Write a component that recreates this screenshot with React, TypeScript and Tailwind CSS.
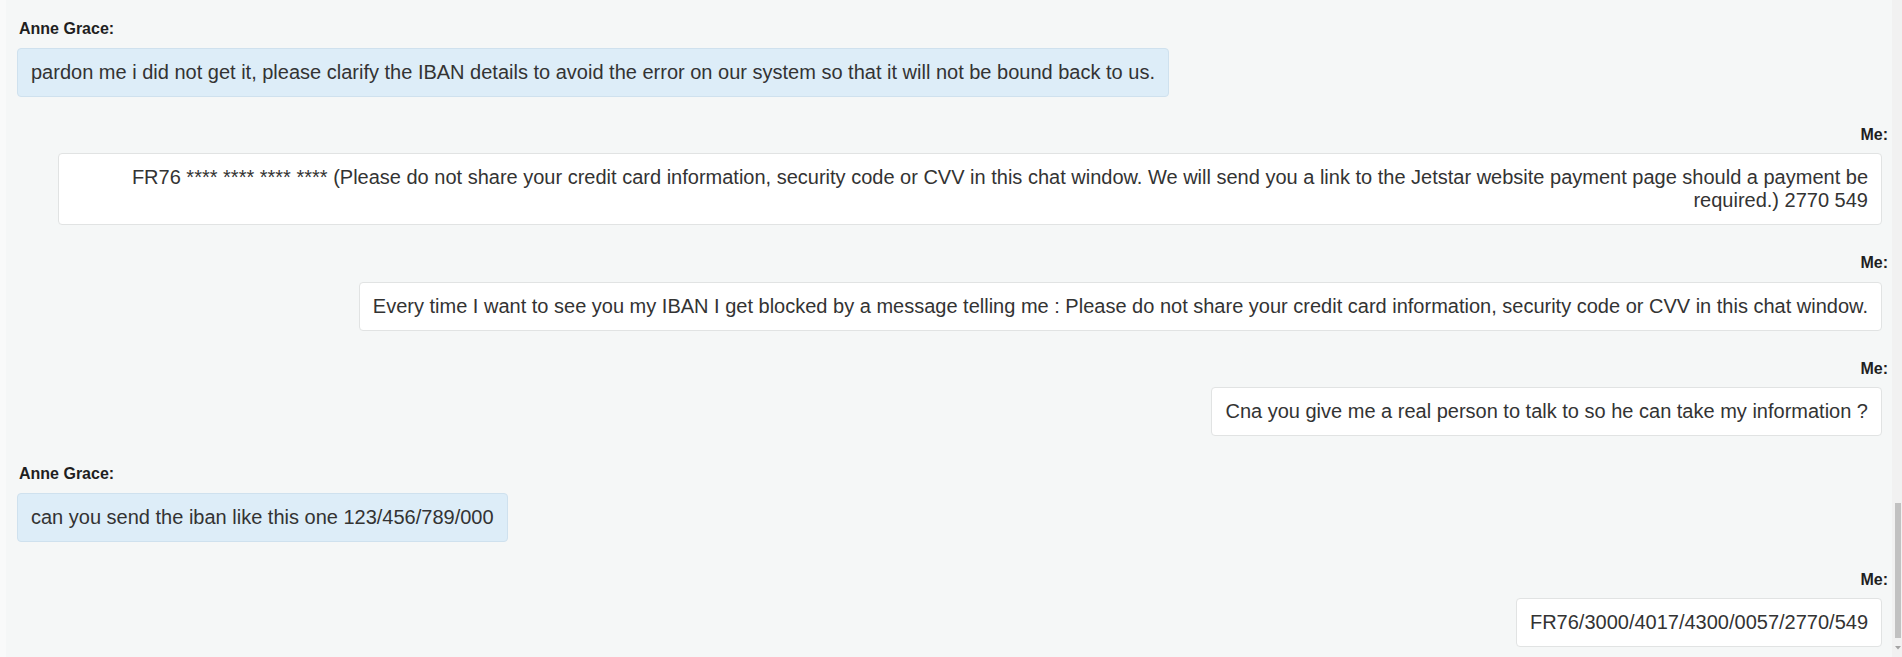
import React from "react";

type Msg = { who: "them" | "me"; text: string };

const messages: Msg[] = [
  {
    who: "them",
    text: "pardon me i did not get it, please clarify the IBAN details to avoid the error on our system so that it will not be bound back to us.",
  },
  {
    who: "me",
    text: "FR76 **** **** **** **** (Please do not share your credit card information, security code or CVV in this chat window. We will send you a link to the Jetstar website payment page should a payment be required.) 2770 549",
  },
  {
    who: "me",
    text: "Every time I want to see you my IBAN I get blocked by a message telling me : Please do not share your credit card information, security code or CVV in this chat window.",
  },
  {
    who: "me",
    text: "Cna you give me a real person to talk to so he can take my information ?",
  },
  {
    who: "them",
    text: "can you send the iban like this one 123/456/789/000",
  },
  {
    who: "me",
    text: "FR76/3000/4017/4300/0057/2770/549",
  },
];

function Message({ m, first }: { m: Msg; first: boolean }) {
  const mine = m.who === "me";
  return (
    <div className={`flex flex-col ${mine ? "items-end" : "items-start"} ${first ? "" : "mt-[29px]"}`}>
      <div
        className={`text-[16px] font-bold leading-[18px] text-[#1f1f1f] ${mine ? "text-right" : "pl-[2px]"}`}
      >
        {mine ? "Me:" : "Anne Grace:"}
      </div>
      <div
        className={`mt-[9.5px] max-w-[1824px] rounded-[4px] border px-[13px] py-3 text-[20px] leading-[23px] text-[#333333] ${
          mine
            ? "mr-[6px] border-[#e1e3e3] bg-white text-right"
            : "border-[#cfe1ee] bg-[#ddedf8] text-left"
        }`}
      >
        {m.text}
      </div>
    </div>
  );
}

export default function App() {
  return (
    <div className="flex h-[657px] w-full overflow-hidden bg-[#f5f7f7] font-['Liberation_Sans',Arial,sans-serif]">
      <div className="w-[6px] shrink-0 bg-[#f9fafa]" />
      <div className="min-w-0 flex-1 pl-[11px] pr-[4px] pt-5">
        {messages.map((m, i) => (
          <Message key={i} m={m} first={i === 0} />
        ))}
      </div>
      <div className="flex w-[10px] shrink-0 flex-col bg-[#f1f1f1]">
        <div className="h-[503px]" />
        <div className="ml-[3px] h-[135px] w-[6px] bg-[#c1c1c1]" />
        <div className="flex flex-1 items-center justify-center pl-[2px]">
          <svg width="6" height="4" viewBox="0 0 6 4">
            <path d="M0 0 L6 0 L3 3.5 Z" fill="#a3a3a3" />
          </svg>
        </div>
      </div>
    </div>
  );
}
